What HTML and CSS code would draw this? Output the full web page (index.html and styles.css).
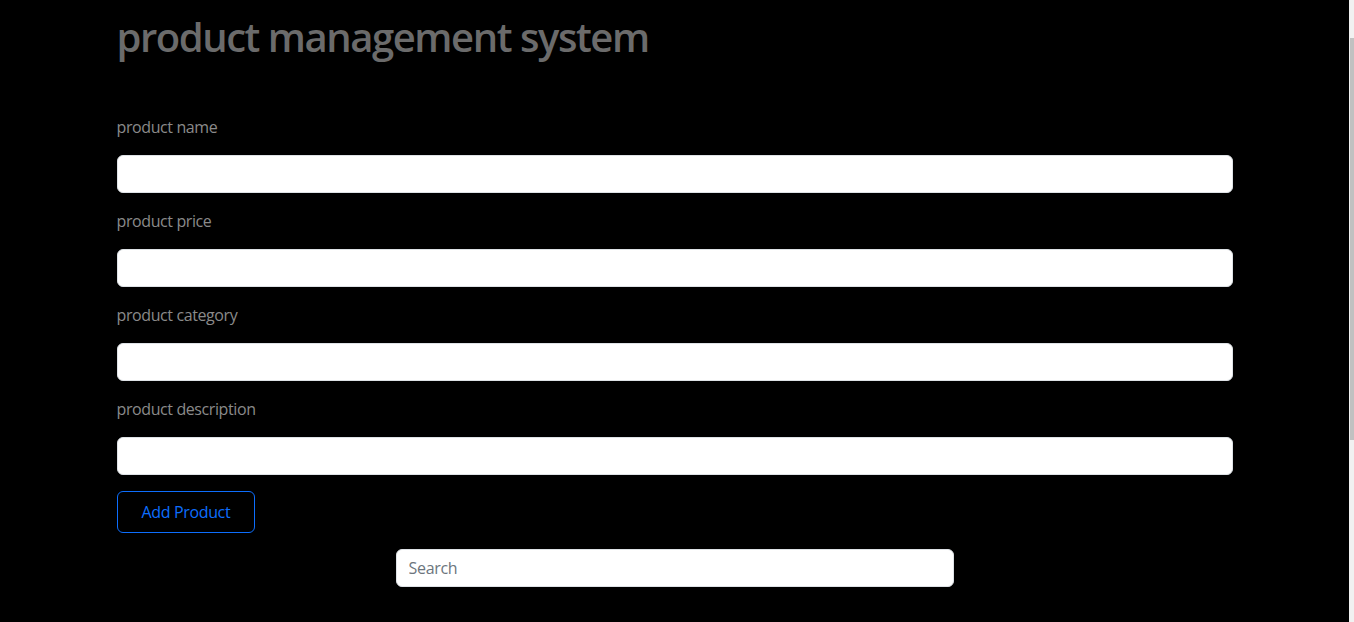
FILE: index.html
```html
<!DOCTYPE html>
<html lang="en">
<head>
<meta charset="utf-8">
<title>product management system</title>
<link rel="stylesheet" href="styles.css">
</head>
<body>
<div class="viewport">
  <main class="page">
    <div class="container">
      <h1 class="title">product management system</h1>
      <form class="product-form">
        <div class="field">
          <label class="field-label" for="pname">product name</label>
          <input class="field-input" id="pname" type="text">
        </div>
        <div class="field">
          <label class="field-label" for="pprice">product price</label>
          <input class="field-input" id="pprice" type="text">
        </div>
        <div class="field">
          <label class="field-label" for="pcat">product category</label>
          <input class="field-input" id="pcat" type="text">
        </div>
        <div class="field">
          <label class="field-label" for="pdesc">product description</label>
          <input class="field-input" id="pdesc" type="text">
        </div>
        <button class="btn-add" type="button">Add Product</button>
      </form>
      <div class="search-row">
        <input class="search-input" type="text" placeholder="Search">
      </div>
    </div>
  </main>
  <div class="scrollbar">
    <div class="scrollbar-thumb"></div>
  </div>
</div>
</body>
</html>
```
FILE: styles.css
```css
* { box-sizing: border-box; }
html, body {
  margin: 0;
  padding: 0;
  height: 100%;
  overflow: hidden;
  background: #000;
}
body {
  font-family: "Open Sans", "Noto Sans", sans-serif;
  font-size: 16px;
  line-height: 24px;
  color: #212529;
}
.viewport {
  display: flex;
  height: 622px;
}
.page {
  flex: 1;
  min-width: 0;
}
.container {
  width: 1116px;
  margin: 0 auto;
  padding-top: 13px;
}
.title {
  margin: 0 0 54px;
  font-size: 40px;
  line-height: 48px;
  font-weight: 600;
  color: #6b6b6b;
  letter-spacing: -1.45px;
}
.product-form {
  display: flex;
  flex-direction: column;
  align-items: flex-start;
}
.field {
  display: flex;
  flex-direction: column;
  width: 100%;
  margin-bottom: 16px;
}
.field-label {
  color: #8a8a8a;
  font-size: 16px;
  line-height: 24px;
  margin-bottom: 16px;
  letter-spacing: -0.4px;
}
.field-input, .search-input {
  display: block;
  width: 100%;
  height: 38px;
  padding: 6px 12px;
  font: inherit;
  font-size: 16px;
  color: #212529;
  background: #fff;
  border: 1px solid #dee2e6;
  border-radius: 6px;
  outline: none;
}
.btn-add {
  height: 42px;
  padding: 8px 24px;
  font: inherit;
  font-size: 16px;
  line-height: 24px;
  letter-spacing: -0.35px;
  color: #0d6efd;
  background: transparent;
  border: 1px solid #0d6efd;
  border-radius: 6px;
}
.search-row {
  display: flex;
  justify-content: center;
  margin-top: 16px;
}
.search-input {
  width: 558px;
}
.search-input::placeholder {
  color: #6c757d;
  letter-spacing: -0.3px;
}
.scrollbar {
  width: 5px;
  background: #f1f1f1;
  padding: 38px 0 182px 1px;
}
.scrollbar-thumb {
  height: 100%;
  background: #c1c1c1;
}
```
